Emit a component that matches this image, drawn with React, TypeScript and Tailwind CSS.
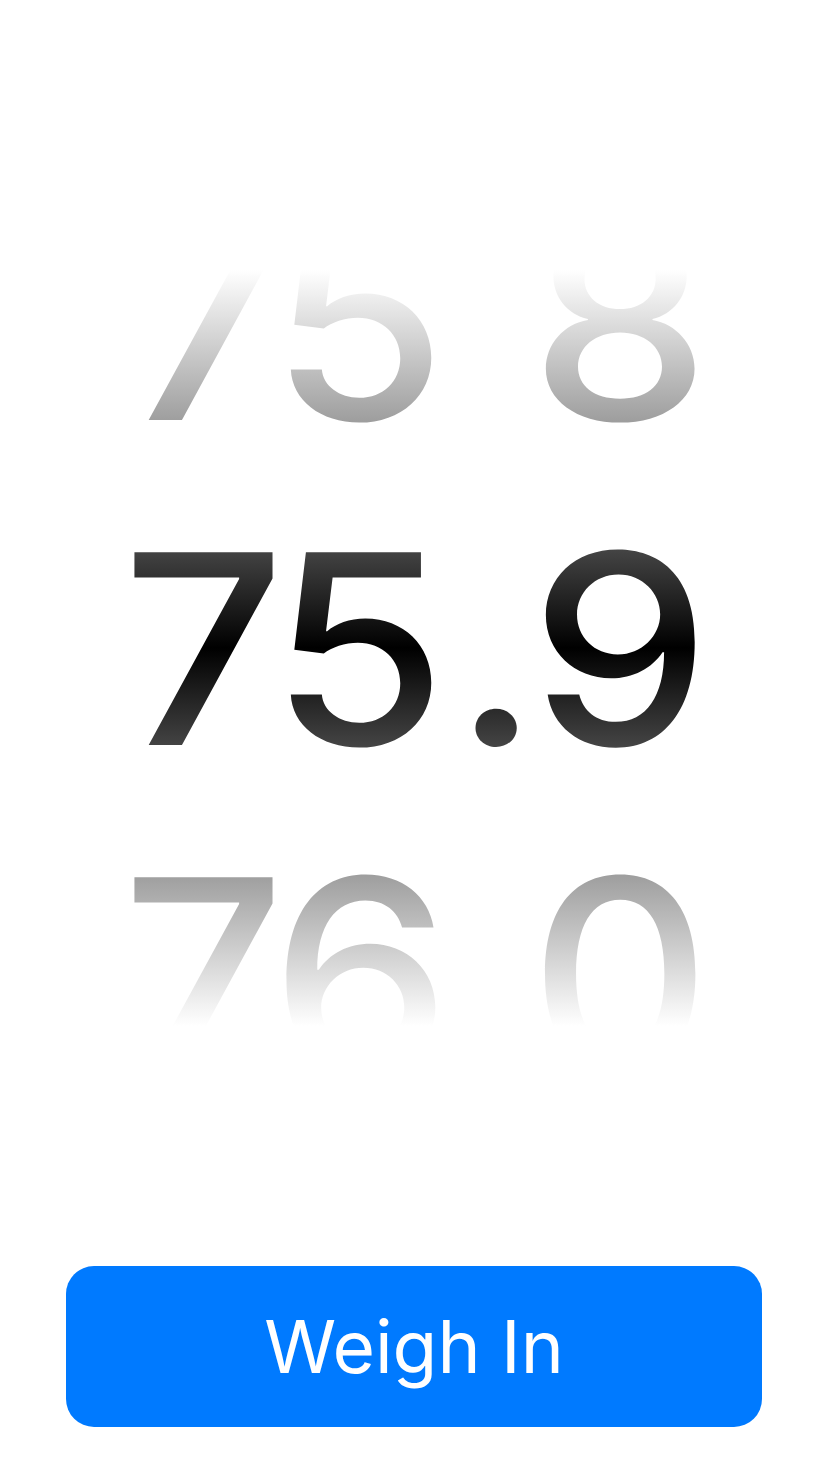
import React from 'react';

interface ColumnProps {
    lines: string[];
    className: string;
}

// One wheel of the picker; the row above holds the fade gradient
const Column: React.FC<ColumnProps> = ({ lines, className }) => (
    <div className={`shrink-0 text-center ${className}`}>
        <div className="mt-[-109px]">
            {lines.map((l, i) => (
                <div key={i}>{l}</div>
            ))}
        </div>
    </div>
);

const App: React.FC = () => {
    return (
        <div
            className="w-[828px] h-[1472px] bg-white flex flex-col items-center"
            style={{ fontFamily: 'Inter, "Noto Sans", sans-serif' }}
        >
            {/* Weight picker */}
            <div className="mt-[270px] w-full h-[756px] flex pl-[100px] overflow-hidden scale-x-[1.08] origin-center text-[265px] leading-[325px] font-[450] tabular-nums bg-[linear-gradient(to_bottom,#ffffff_0%,#9e9e9e_20%,#444444_37%,#000000_50%,#444444_63%,#9e9e9e_80%,#ffffff_100%)] bg-clip-text text-transparent">
                <Column className="w-[358px] tracking-[-26px]" lines={['75', '75', '76']} />
                <Column className="w-[52px] -ml-[4px]" lines={['\u00a0', '.', '\u00a0']} />
                <Column className="w-[198px]" lines={['8', '9', '0']} />
            </div>

            {/* Action */}
            <button className="mt-[240px] w-[696px] h-[161px] rounded-[28px] bg-[#007aff] text-white text-[73px] font-normal leading-none cursor-pointer">
                Weigh In
            </button>
        </div>
    );
};

export default App;
